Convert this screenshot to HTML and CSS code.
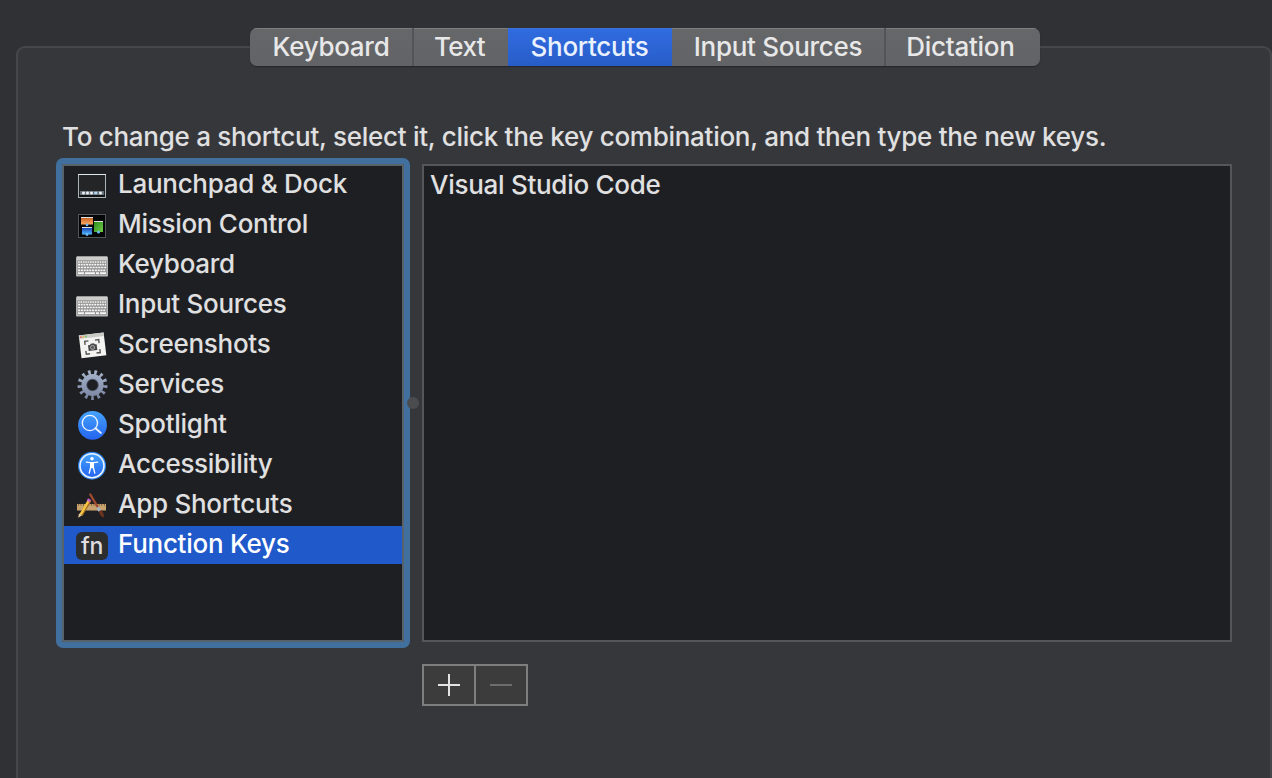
FILE: index.html
```html
<!DOCTYPE html>
<html lang="en">
<head>
<meta charset="utf-8">
<title>Keyboard</title>
<link rel="stylesheet" href="styles.css">
</head>
<body>
<main class="panel">
  <nav class="tabs">
    <button class="tab keyboard">Keyboard</button>
    <button class="tab text">Text</button>
    <button class="tab shortcuts active">Shortcuts</button>
    <button class="tab sources">Input Sources</button>
    <button class="tab dictation">Dictation</button>
  </nav>
  <p class="hint">To change a shortcut, select it, click the key combination, and then type the new keys.</p>
  <div class="columns">
    <ul class="categories">
      <li class="row"><svg class="icon" viewBox="0 0 32 32"><rect x="2.5" y="5.5" width="27" height="23" fill="#232526" stroke="#a9b5b5"/><path d="M2 5.5H30" stroke="#dcebea"/><rect x="4" y="22" width="24" height="4" fill="#6b7378"/><path d="M3 27H29" stroke="#101213" stroke-width="2"/><g fill="#e9f3fa"><circle cx="7.5" cy="24" r="1.5"/><circle cx="11.5" cy="24" r="1.5"/><circle cx="15.5" cy="24" r="1.5"/><rect x="18.3" y="22.8" width="3" height="2.4" fill="#b7dcfa"/><circle cx="24.5" cy="24" r="1.5"/></g></svg><span>Launchpad &amp; Dock</span></li>
      <li class="row"><svg class="icon" viewBox="0 0 32 32"><defs><linearGradient id="orange" x2="0" y2="1"><stop stop-color="#bd571e"/><stop offset="1" stop-color="#ffad64"/></linearGradient><linearGradient id="green" x2="1" y2="1"><stop stop-color="#2e8c22"/><stop offset="1" stop-color="#72cf47"/></linearGradient><linearGradient id="blue" x2="0" y2="1"><stop stop-color="#1747b2"/><stop offset="1" stop-color="#55baff"/></linearGradient></defs><rect x="2.5" y="5.5" width="27" height="23" fill="#050607" stroke="#515656"/><rect x="5" y="8" width="12" height="7.5" fill="url(#orange)"/><path d="M5 8.5H17M6 18.5H16M18 12.5H27" stroke="#e0e0dc"/><rect x="6" y="19" width="10" height="6.5" fill="url(#blue)"/><rect x="18" y="13" width="9" height="10" fill="url(#green)"/><g fill="#6bbcff"><circle cx="11" cy="15.8" r="1.4"/><circle cx="11" cy="25.5" r="1.4"/><circle cx="22.5" cy="23.2" r="1.4"/></g></svg><span>Mission Control</span></li>
      <li class="row"><svg class="icon" viewBox="0 0 32 32"><defs><symbol id="keys" viewBox="0 0 32 32"><rect y="9" width="32" height="19" rx="1" fill="#6b6c6e"/><rect y="7.5" width="32" height="19.5" rx="1" fill="#b3b3b3"/><rect x="1" y="7.5" width="30" height="3.5" fill="#cdcdcc"/><rect x="1.5" y="11.5" width="29" height="14" fill="#8b8b8b"/><g stroke="#f6f6f6" stroke-width="1.7"><path d="M2 13H30" stroke-dasharray="1.7 .7"/><path d="M2 15.7H30" stroke-dasharray="2 .7"/><path d="M2 18.5H30" stroke-dasharray="2.2 .7"/><path d="M2 21.3H30" stroke-dasharray="2.1 .7"/><path d="M2 24.2H8M9 24.2H19M20 24.2H23M24 24.2H30"/></g></symbol></defs><use href="#keys" width="32" height="32"/></svg><span>Keyboard</span></li>
      <li class="row"><svg class="icon" viewBox="0 0 32 32"><use href="#keys" width="32" height="32"/></svg><span>Input Sources</span></li>
      <li class="row"><svg class="icon" viewBox="0 0 32 32"><g transform="rotate(-7 16 16)"><rect x="4" y="5" width="25" height="23" fill="#f3f3f1"/><rect x="4" y="5" width="25" height="3.5" fill="#c9c9c6"/><circle cx="6" cy="6.8" r=".9" fill="#ff635b"/><circle cx="8.5" cy="6.8" r=".9" fill="#e9bd42"/><circle cx="11" cy="6.8" r=".9" fill="#65c75a"/><path d="M9.2 15V11.5H13M19.5 11.5H23.3V15M23.3 21V24.5H19.5M13 24.5H9.2V21" fill="none" stroke="#555" stroke-width="1.4"/><path d="M12 15.7H14L15 14.5H18L19 15.7H20.7V21.5H12Z" fill="#484848"/><circle cx="16.3" cy="18.5" r="2" fill="#555" stroke="#ccc" stroke-width=".7"/></g></svg><span>Screenshots</span></li>
      <li class="row"><svg class="icon" viewBox="0 0 32 32"><defs><linearGradient id="steel" gradientUnits="userSpaceOnUse" x1="0" y1="1" x2="0" y2="31"><stop stop-color="#a9b6cd"/><stop offset="1" stop-color="#7884a0"/></linearGradient></defs><g fill="none" stroke="url(#steel)"><circle cx="16.5" cy="16" r="8.5" stroke-width="5.2"/><circle cx="16.5" cy="16" r="12.6" stroke-width="4.8" pathLength="130" stroke-dasharray="4.2 5.8" stroke-dashoffset="-30.4"/></g><circle cx="16.5" cy="16" r="5.8" fill="none" stroke="#5c667c" stroke-width=".7"/></svg><span>Services</span></li>
      <li class="row"><svg class="icon" viewBox="0 0 32 32"><defs><linearGradient id="sky" x2="0" y2="1"><stop stop-color="#45a3fc"/><stop offset="1" stop-color="#2464ef"/></linearGradient></defs><circle cx="16.5" cy="16.3" r="14.4" fill="url(#sky)"/><g fill="none" stroke="#edf4fd"><circle cx="13.9" cy="14" r="7.6" stroke-width="1.4"/><path d="M19.5 19.2L24.8 23.9" stroke-width="1.9" stroke-linecap="round"/></g></svg><span>Spotlight</span></li>
      <li class="row"><svg class="icon" viewBox="0 0 32 32"><circle cx="16" cy="16.7" r="14" fill="#2d82e8"/><circle cx="16" cy="16.7" r="12" fill="url(#sky)" stroke="#eef6ff" stroke-width="1.6"/><circle cx="16" cy="9.7" r="1.8" fill="#fff"/><path d="M10.3 13.1L14.5 13.7H17.5L21.7 13.1M14.8 17L14.4 19.5L13.2 24.2M17.2 17L17.6 19.5L18.8 24.2" fill="none" stroke="#fff" stroke-width="1.3" stroke-linecap="round"/><path d="M14 13H18V19.2H14Z" fill="#fff"/></svg><span>Accessibility</span></li>
      <li class="row"><svg class="icon" viewBox="0 0 32 32"><rect x="1" y="15" width="29" height="6.5" fill="#c9a36d"/><path d="M2 15.8H30" stroke="#725333" stroke-width="2" stroke-dasharray=".8 1.8"/><path d="M5 26L14 11" stroke="#a36b20" stroke-width="3.5"/><path d="M4.7 25.5L13 11.2" stroke="#f6c943" stroke-width="2.3"/><path d="M12.2 12.5L13.5 10.2" stroke="#ce63c9" stroke-width="3.4"/><path d="M2.2 28.8L3 24.5L6 26.3Z" fill="#ead0a1"/><path d="M14.3 5.5L22.3 19" stroke="#a04a30" stroke-width="2.4" stroke-linecap="round"/><path d="M21.7 18.3L23.8 22" stroke="#a4b7c5" stroke-width="3"/><path d="M22.8 22.5L25.5 21Q28.5 24.5 27.7 28.7Q23.5 27 22.8 22.5" fill="#6a3220"/></svg><span>App Shortcuts</span></li>
      <li class="row selected"><span class="fn">fn</span><span>Function Keys</span></li>
    </ul>
    <div class="divider"><i class="grip"></i></div>
    <section class="detail">
      <div class="apps">Visual Studio Code</div>
      <div class="actions">
        <button class="action" aria-label="Add"><svg class="symbol" viewBox="0 0 22 22"><path d="M0 11H22M11 0V22"/></svg></button>
        <button class="action off" aria-label="Remove"><svg class="symbol" viewBox="0 0 22 22"><path d="M0 11H22"/></svg></button>
      </div>
    </section>
  </div>
</main>
</body>
</html>
```
FILE: styles.css
```css
* { box-sizing: border-box; }
body {
  margin: 0;
  height: 778px;
  overflow: hidden;
  padding: 46px 0 0 16px;
  background: #303135;
  color: #e0e0e1;
  font: 450 26px/38px Inter, sans-serif;
  letter-spacing: -.28px;
}
button { margin: 0; padding: 0; border: 0; font: inherit; letter-spacing: inherit; color: inherit; }
.panel {
  width: 1256px;
  height: 760px;
  border: 2px solid #46474b;
  border-radius: 9px;
  background: #36373b;
}
.tabs {
  display: flex;
  width: 790px;
  height: 38px;
  margin: -20px 0 0 232px;
  border-radius: 7px;
  overflow: hidden;
  background: linear-gradient(#666769, #626366);
  box-shadow: 0 1px 1px #242529;
}
.tab {
  background: none;
  color: #e8e8e9;
  white-space: nowrap;
  box-shadow: inset 0 1px #7e7f81;
}
.keyboard { width: 164px; border-right: 2px solid #535457; }
.text { width: 94px; padding-right: 3px; letter-spacing: -.6px; }
.shortcuts { width: 164px; padding-right: 1px; }
.sources { width: 214px; border-right: 2px solid #535457; }
.dictation { width: 154px; padding-right: 5px; }
.active { background: linear-gradient(#306ce1, #285dc7); color: #eaf1ff; box-shadow: inset 0 1px #3e73da; }
.hint { margin: 52px 0 2px 44px; white-space: nowrap; }
.columns { display: flex; margin-left: 38px; }
.categories {
  display: flex;
  flex-direction: column;
  gap: 2px;
  width: 354px;
  height: 490px;
  margin: 0;
  padding: 2px;
  list-style: none;
  border: 6px solid #416f9e;
  border-radius: 7px;
  background: #1e1f23;
  box-shadow: inset 0 0 0 2px #58626a;
}
.row { display: flex; gap: 10px; height: 38px; padding-left: 12px; line-height: 36px; white-space: nowrap; }
.icon { width: 32px; height: 32px; margin-top: 3px; flex: none; }
.selected { background: #2059c9; color: #fff; }
.fn {
  width: 32px;
  height: 28px;
  margin-top: 6px;
  border-radius: 6px;
  background: #2c2d2f;
  color: #dedee0;
  font-size: 23px;
  line-height: 28px;
  text-align: center;
}
.divider { width: 12px; padding-top: 239px; }
.grip { display: block; width: 12px; height: 12px; margin-left: -3px; border-radius: 50%; background: #4b4c50; }
.detail { padding-top: 6px; }
.apps {
  width: 810px;
  height: 478px;
  padding: 0 0 0 6px;
  border: 2px solid #555657;
  background: #1e1f23;
}
.actions { display: flex; width: 106px; height: 42px; margin-top: 22px; border: 2px solid #7e7e7f; }
.action { display: grid; place-content: center; width: 50px; background: #3c3c3c; }
.off { width: 52px; border-left: 2px solid #7e7e7f; }
.symbol { width: 22px; height: 22px; stroke: #e3e3e3; stroke-width: 2; }
.off .symbol { stroke: #6d6d6e; }
```
